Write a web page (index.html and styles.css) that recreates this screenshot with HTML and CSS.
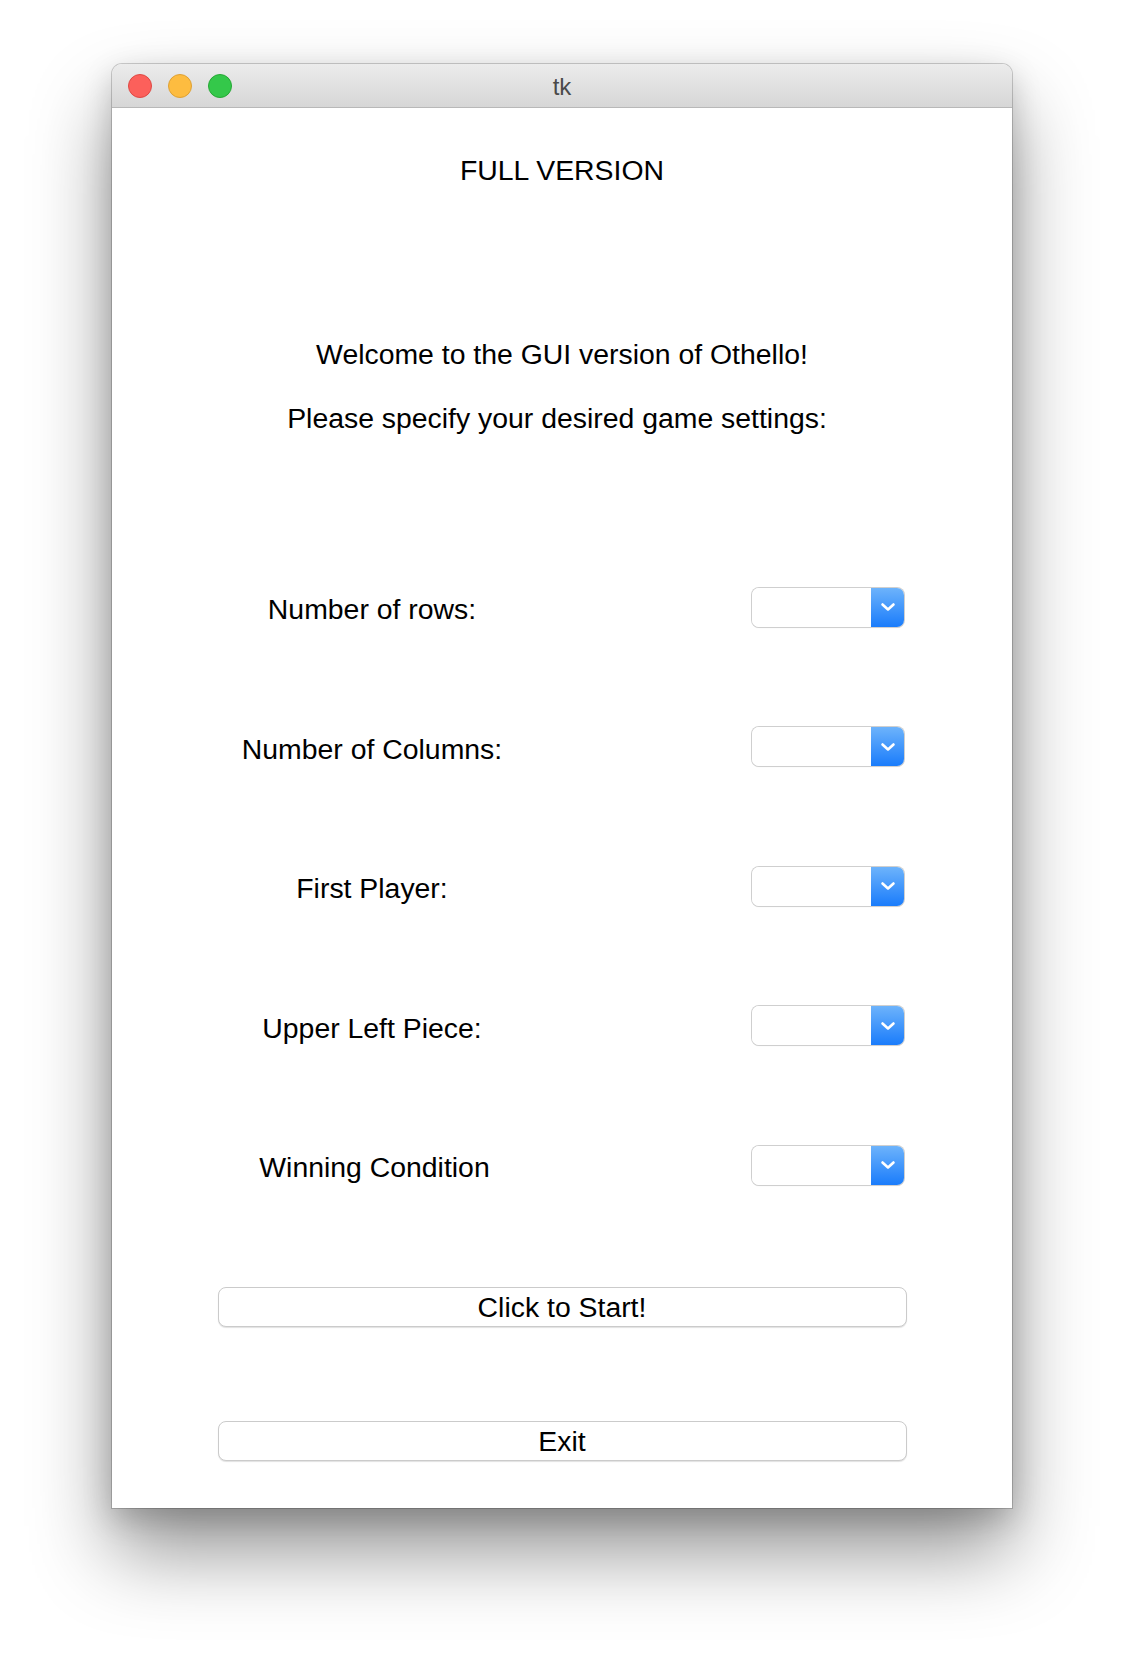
FILE: index.html
```html
<!DOCTYPE html>
<html>
<head>
<meta charset="utf-8">
<link rel="stylesheet" href="styles.css">
</head>
<body>
<div class="window">
  <div class="titlebar">
    <div class="lights">
      <span class="light red"></span>
      <span class="light yellow"></span>
      <span class="light green"></span>
    </div>
    <div class="title">tk</div>
  </div>
  <div class="content">
    <div class="heading">FULL VERSION</div>
    <div class="welcome">Welcome to the GUI version of Othello!</div>
    <div class="please">Please specify your desired game settings:</div>
    <div class="rows">
      <div class="row"><div class="label">Number of rows:</div><div class="select"><div class="field"></div><div class="arrow"><svg width="16" height="10" viewBox="0 0 16 10"><path d="M2.5 2.5 L8 7.5 L13.5 2.5" fill="none" stroke="#fff" stroke-width="2.6" stroke-linecap="round" stroke-linejoin="round"/></svg></div></div></div>
      <div class="row"><div class="label">Number of Columns:</div><div class="select"><div class="field"></div><div class="arrow"><svg width="16" height="10" viewBox="0 0 16 10"><path d="M2.5 2.5 L8 7.5 L13.5 2.5" fill="none" stroke="#fff" stroke-width="2.6" stroke-linecap="round" stroke-linejoin="round"/></svg></div></div></div>
      <div class="row"><div class="label">First Player:</div><div class="select"><div class="field"></div><div class="arrow"><svg width="16" height="10" viewBox="0 0 16 10"><path d="M2.5 2.5 L8 7.5 L13.5 2.5" fill="none" stroke="#fff" stroke-width="2.6" stroke-linecap="round" stroke-linejoin="round"/></svg></div></div></div>
      <div class="row"><div class="label">Upper Left Piece:</div><div class="select"><div class="field"></div><div class="arrow"><svg width="16" height="10" viewBox="0 0 16 10"><path d="M2.5 2.5 L8 7.5 L13.5 2.5" fill="none" stroke="#fff" stroke-width="2.6" stroke-linecap="round" stroke-linejoin="round"/></svg></div></div></div>
      <div class="row"><div class="label label-wide">Winning Condition</div><div class="select"><div class="field"></div><div class="arrow"><svg width="16" height="10" viewBox="0 0 16 10"><path d="M2.5 2.5 L8 7.5 L13.5 2.5" fill="none" stroke="#fff" stroke-width="2.6" stroke-linecap="round" stroke-linejoin="round"/></svg></div></div></div>
    </div>
    <div class="btn btn-start">Click to Start!</div>
    <div class="btn btn-exit">Exit</div>
  </div>
</div>
</body>
</html>
```

FILE: styles.css
```css
html, body {
  margin: 0;
  padding: 0;
  background: #ffffff;
}
body {
  width: 1124px;
  height: 1668px;
  overflow: hidden;
  padding: 64px 0 0 112px;
  box-sizing: border-box;
  font-family: "Liberation Sans", Arial, sans-serif;
}
.window {
  width: 900px;
  height: 1444px;
  background: #ffffff;
  border-radius: 10px 10px 0 0;
  box-shadow: 0 0 0 1px rgba(0,0,0,0.18), 0 44px 80px rgba(0,0,0,0.42), 0 10px 30px rgba(0,0,0,0.18);
  display: flex;
  flex-direction: column;
}
.titlebar {
  height: 43px;
  border-bottom: 1px solid #b8b8b8;
  border-radius: 10px 10px 0 0;
  background: linear-gradient(#ececec, #d6d6d6);
  position: relative;
  display: flex;
  align-items: center;
  justify-content: center;
}
.lights {
  position: absolute;
  left: 16px;
  top: 10px;
  display: flex;
  gap: 16px;
}
.light {
  width: 22px;
  height: 22px;
  border-radius: 50%;
  display: block;
  border: 1px solid;
}
.red { background: #fc605b; border-color: #de4944; }
.yellow { background: #fdbc40; border-color: #dea134; }
.green { background: #34c84a; border-color: #26a835; }
.title {
  font-size: 24px;
  color: #4a4a4a;
  margin-top: 2px;
}
.content {
  display: flex;
  flex-direction: column;
  color: #000;
  font-size: 28.4px;
  line-height: 32px;
}
.heading {
  margin-top: 46px;
  text-align: center;
}
.welcome {
  margin-top: 152px;
  text-align: center;
}
.please {
  margin-top: 32px;
  text-align: center;
  padding-right: 10px;
}
.rows {
  margin-top: 153px;
  display: flex;
  flex-direction: column;
  gap: 99.6px;
}
.row {
  display: grid;
  grid-template-columns: 520px 152px;
  column-gap: 120px;
  align-items: center;
  height: 40px;
}
.label {
  text-align: center;
  padding-top: 4px;
}
.label-wide {
  padding-left: 5px;
}
.select {
  display: flex;
  height: 39px;
  border-radius: 7px;
  box-shadow: 0 0 0 1px #cfcfcf, 0 1px 1px rgba(0,0,0,0.12);
  overflow: hidden;
}
.field {
  flex: 1;
  background: #fff;
}
.arrow {
  width: 33px;
  background: linear-gradient(#6db3fb, #1a7cfb);
  display: flex;
  align-items: center;
  justify-content: center;
}
.arrow svg {
  display: block;
}
.btn {
  align-self: center;
  width: 687px;
  height: 38px;
  border: 1px solid #cbcbcb;
  border-radius: 8px;
  box-shadow: 0 1px 1px rgba(0,0,0,0.12);
  background: #fff;
  text-align: center;
  line-height: 38px;
}
.btn-start {
  margin-top: 102px;
}
.btn-exit {
  margin-top: 94px;
}
```
